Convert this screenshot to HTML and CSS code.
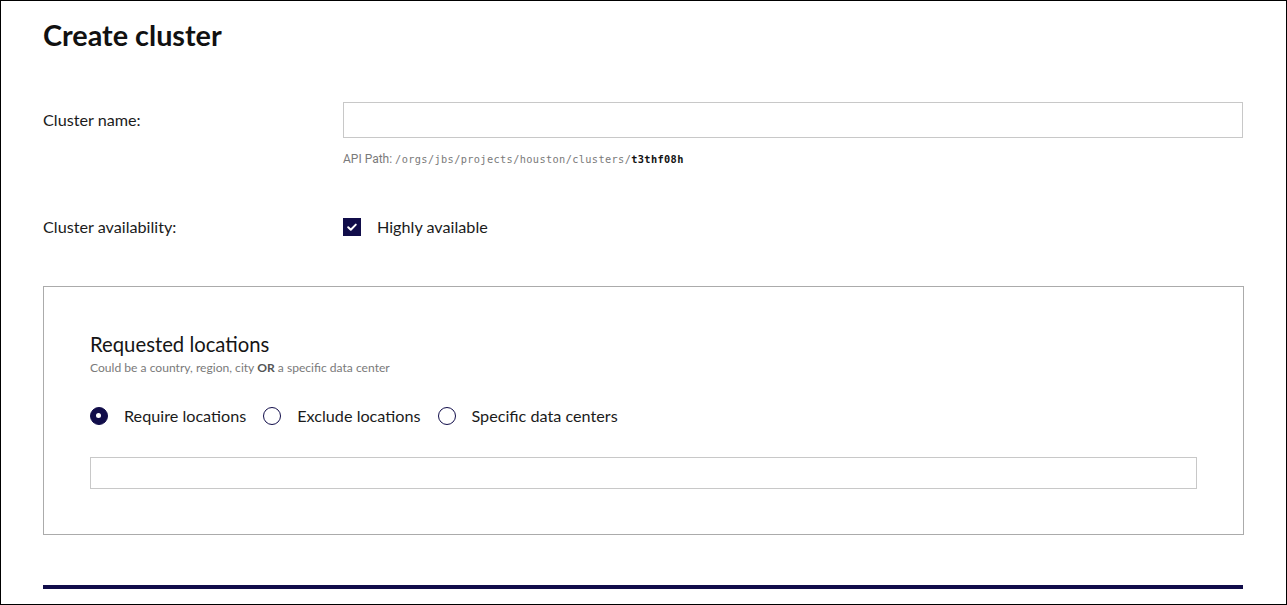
FILE: index.html
```html
<!DOCTYPE html>
<html lang="en">
<head>
<meta charset="utf-8">
<title>Create cluster</title>
<link rel="stylesheet" href="styles.css">
</head>
<body>
<div class="frame">
  <h1 class="title">Create cluster</h1>

  <div class="row row-name">
    <label class="row-label" for="cname">Cluster name:</label>
    <div class="row-field">
      <input id="cname" class="text-input" type="text">
    </div>
  </div>
  <div class="row-hint">
    <div></div>
    <div class="hint"><span class="hint-label">API Path: </span><span class="mono">/orgs/jbs/projects/houston/clusters/</span><span class="mono strong">t3thf08h</span></div>
  </div>

  <div class="row row-avail">
    <span class="row-label">Cluster availability:</span>
    <div class="row-field check-line">
      <span class="checkbox">
        <svg width="18" height="18" viewBox="0 0 18 18"><path d="M5.2 9.2 L7.8 11.7 L12.8 6.6" fill="none" stroke="#fff" stroke-width="2" stroke-linecap="round" stroke-linejoin="round"/></svg>
      </span>
      <span class="check-text">Highly available</span>
    </div>
  </div>

  <section class="locations">
    <h2 class="loc-title">Requested locations</h2>
    <p class="loc-sub">Could be a country, region, city <b>OR</b> a specific data center</p>
    <div class="radios">
      <span class="radio-item"><span class="radio on"></span><span class="radio-text">Require locations</span></span>
      <span class="radio-item"><span class="radio"></span><span class="radio-text">Exclude locations</span></span>
      <span class="radio-item"><span class="radio"></span><span class="radio-text">Specific data centers</span></span>
    </div>
    <input class="loc-input" type="text">
  </section>

  <div class="bar"></div>
</div>
</body>
</html>
```

FILE: styles.css
```css
* { box-sizing: border-box; }
html, body { margin: 0; padding: 0; background: #fff; }
body {
  font-family: "Lato", "Noto Sans", sans-serif;
  color: #1b1b1b;
}
.frame {
  width: 1287px;
  height: 605px;
  border: 1px solid #000;
  padding: 16px 42px 0 42px;
  overflow: hidden;
}
.title {
  margin: 0;
  font-size: 28.8px;
  line-height: 36px;
  font-weight: 700;
  color: #111;
}
.row {
  display: grid;
  grid-template-columns: 300px 900px;
  align-items: center;
}
.row-label {
  font-size: 16.2px;
  line-height: 18px;
}
.row-name { margin-top: 49px; }
.text-input {
  display: block;
  width: 900px;
  height: 36px;
  border: 1px solid #c8c8c8;
  background: #fff;
  margin: 0;
  padding: 0 10px;
  outline: none;
}
.row-hint {
  display: grid;
  grid-template-columns: 300px 900px;
  margin-top: 14px;
}
.hint {
  font-size: 12px;
  line-height: 14px;
  color: #7a7a7a;
  font-family: "Roboto", "Liberation Sans", sans-serif;
}
.hint-label { margin-right: 0; }
.mono {
  font-family: "DejaVu Sans Mono", "Liberation Mono", monospace;
  font-size: 10.3px;
  letter-spacing: 0.36px;
}
.strong { color: #111; font-weight: 700; }
.row-avail { margin-top: 52px; }
.check-line {
  display: flex;
  align-items: center;
  height: 18px;
}
.checkbox {
  width: 18px;
  height: 18px;
  background: #110d4a;
  display: inline-flex;
}
.check-text {
  margin-left: 16px;
  font-size: 16.2px;
  line-height: 18px;
}
.locations {
  margin-top: 50px;
  border: 1px solid #ababab;
  padding: 45px 46px 45px 46px;
}
.loc-title {
  margin: 0;
  font-size: 20.3px;
  line-height: 24px;
  font-weight: 400;
  color: #151515;
}
.loc-sub {
  margin: 5px 0 0 0;
  font-size: 12.1px;
  line-height: 14px;
  color: #7a7a7a;
}
.loc-sub b { color: #555; }
.radios {
  margin-top: 31px;
  height: 20px;
  display: flex;
  align-items: center;
}
.radio-item {
  display: inline-flex;
  align-items: center;
  margin-right: 17px;
}
.radio {
  width: 18px;
  height: 18px;
  border-radius: 50%;
  border: 1.5px solid #110d4a;
  display: inline-block;
  position: relative;
}
.radio.on {
  background: #110d4a;
}
.radio.on::after {
  content: "";
  position: absolute;
  left: 5px;
  top: 5px;
  width: 5px;
  height: 5px;
  border-radius: 50%;
  background: #fff;
}
.radio-text {
  margin-left: 16px;
  font-size: 16.2px;
  line-height: 18px;
}
.loc-input {
  display: block;
  margin: 31px 0 0 0;
  width: 100%;
  height: 32px;
  border: 1px solid #c8c8c8;
  background: #fff;
  outline: none;
}
.bar {
  margin-top: 50px;
  height: 4px;
  width: 1200px;
  background: #110d4a;
}
```
